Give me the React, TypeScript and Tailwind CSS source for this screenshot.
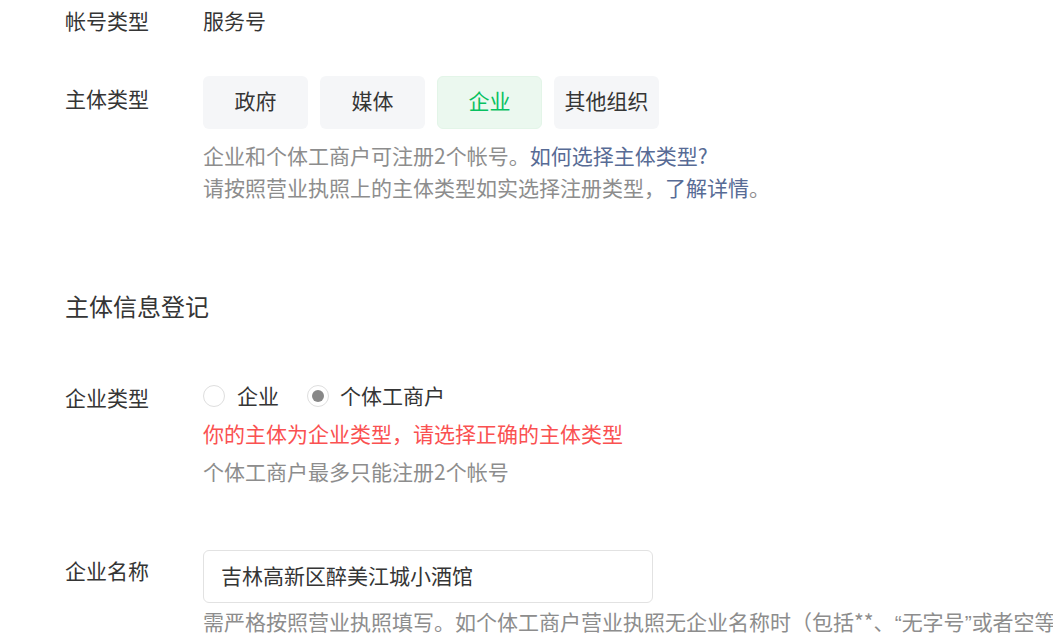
import React from "react";

const font = { fontFamily: '"Noto Sans CJK SC", "Noto Sans", sans-serif' };
const latin = { fontFamily: '"Liberation Sans", "Noto Sans CJK SC", sans-serif' };

function Chip({ label, active }: { label: string; active?: boolean }) {
  return (
    <div
      className={
        "flex h-[53px] w-[105px] items-center justify-center rounded-[6px] pb-[3px] text-[21px] " +
        (active
          ? "border border-[#e3f5e8] bg-[#ebf8ef] text-[#07c160]"
          : "bg-[#f5f6f8] text-[#353535]")
      }
    >
      {label}
    </div>
  );
}

function Radio({ checked }: { checked?: boolean }) {
  return (
    <span className="flex h-[22px] w-[22px] items-center justify-center rounded-full border-[1.5px] border-[#dedede] bg-white">
      {checked && <span className="h-[12px] w-[12px] rounded-full bg-[#888888]" />}
    </span>
  );
}

export default function App() {
  return (
    <div
      className="h-[637px] w-[1053px] overflow-hidden bg-white pl-[65px] text-[#353535]"
      style={font}
    >
      <div className="flex pt-[4px] text-[21px] leading-[32px]">
        <div className="w-[138px] shrink-0">帐号类型</div>
        <div>服务号</div>
      </div>

      <div className="mt-[40px] flex items-start">
        <div className="w-[138px] shrink-0 pt-[6px] text-[21px] leading-[32px]">主体类型</div>
        <div>
          <div className="flex gap-[12px]">
            <Chip label="政府" />
            <Chip label="媒体" />
            <Chip label="企业" active />
            <Chip label="其他组织" />
          </div>
          <div className="mt-[10px] pb-[2px] text-[21px] leading-[32px] text-[#8d8d8d]">
            <div>
              企业和个体工商户可注册2个帐号。<span className="text-[#576b95]">如何选择主体类型?</span>
            </div>
            <div>
              请按照营业执照上的主体类型如实选择注册类型，<span className="text-[#576b95]">了解详情</span>。
            </div>
          </div>
        </div>
      </div>

      <div className="mt-[83px] pb-[2px] text-[24px] leading-[36px]">主体信息登记</div>

      <div className="mt-[53px] flex items-start">
        <div className="w-[138px] shrink-0 pt-[2px] text-[21px] leading-[32px]">企业类型</div>
        <div>
          <div className="flex h-[32px] items-center pt-[2px] text-[21px]">
            <div className="flex items-center gap-[12px]">
              <Radio />
              <span className="-mt-[2px] leading-[32px]">企业</span>
            </div>
            <div className="ml-[28px] flex items-center gap-[11px]">
              <Radio checked />
              <span className="-mt-[2px] leading-[32px]">个体工商户</span>
            </div>
          </div>
          <div className="mt-[6px] text-[21px] leading-[32px] text-[#fa5151]">
            你的主体为企业类型，请选择正确的主体类型
          </div>
          <div className="mt-[6px] text-[21px] leading-[32px] text-[#8d8d8d]">
            个体工商户最多只能注册2个帐号
          </div>
        </div>
      </div>

      <div className="mt-[63px] flex items-start">
        <div className="w-[138px] shrink-0 pt-[4px] text-[21px] leading-[32px]">企业名称</div>
        <div>
          <div className="flex h-[53px] w-[450px] items-center rounded-[6px] border-[1.5px] border-[#e2e2e2] pb-[2px] pl-[17px] text-[21px] text-[#353535]">
            吉林高新区醉美江城小酒馆
          </div>
          <div className="mt-[2px] whitespace-nowrap text-[21px] leading-[32px] text-[#8d8d8d]">
            需严格按照营业执照填写。如个体工商户营业执照无企业名称时（包括**、<span style={latin}>“</span>无字号<span style={latin}>”</span>或者空等情况），请填写<span style={latin}>“</span>个体户+经营者姓名<span style={latin}>”</span>
          </div>
        </div>
      </div>
    </div>
  );
}
